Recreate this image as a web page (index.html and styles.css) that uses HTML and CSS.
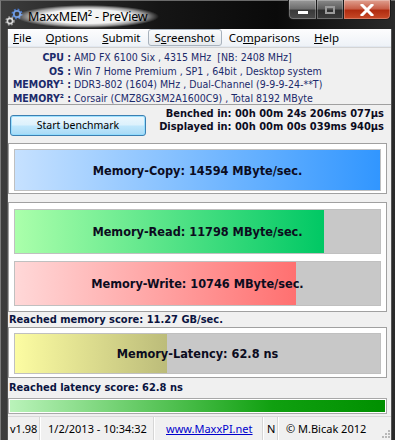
FILE: index.html
```html
<!DOCTYPE html>
<html>
<head>
<meta charset="utf-8">
<title>MaxxMEM² - PreView</title>
<link rel="stylesheet" href="styles.css">
</head>
<body>
<div class="window">
  <div class="titlebar">
    <svg class="appicon" width="20" height="20" viewBox="0 0 20 20">
      <circle cx="13" cy="7" r="4.2" fill="none" stroke="#4a78c8" stroke-width="2.6" stroke-dasharray="1.6 1.7"/>
      <circle cx="13" cy="7" r="3.2" fill="none" stroke="#6e9ae0" stroke-width="1.8"/>
      <circle cx="6" cy="14" r="3.6" fill="none" stroke="#9a9a9a" stroke-width="2.4" stroke-dasharray="1.5 1.5"/>
      <circle cx="6" cy="14" r="2.6" fill="none" stroke="#d8d8d8" stroke-width="1.6"/>
    </svg>
    <span class="title">MaxxMEM² - PreView</span>
    <div class="caption">
      <div class="cbtn cmin"><span class="glyph-min"></span></div>
      <div class="cbtn cmax"><span class="glyph-max"></span></div>
      <div class="cbtn cclose">
        <svg width="14" height="12" viewBox="0 0 14 12"><path d="M2 1 L12 11 M12 1 L2 11" stroke="#ffffff" stroke-width="3" stroke-linecap="square"/></svg>
      </div>
    </div>
  </div>
  <div class="frame">
    <div class="menubar">
      <span class="mi"><u>F</u>ile</span>
      <span class="mi"><u>O</u>ptions</span>
      <span class="mi"><u>S</u>ubmit</span>
      <span class="mi hot">S<u>c</u>reenshot</span>
      <span class="mi">Co<u>m</u>parisons</span>
      <span class="mi"><u>H</u>elp</span>
    </div>
    <div class="client">
      <div class="info">
        <div class="row"><span class="lbl">CPU :</span><span class="val">AMD FX 6100 Six , 4315 MHz&nbsp; [NB: 2408 MHz]</span></div>
        <div class="row"><span class="lbl">OS :</span><span class="val">Win 7 Home Premium , SP1 , 64bit , Desktop system</span></div>
        <div class="row"><span class="lbl">MEMORY¹ :</span><span class="val">DDR3-802 (1604) MHz , Dual-Channel (9-9-9-24-**T)</span></div>
        <div class="row"><span class="lbl">MEMORY² :</span><span class="val">Corsair (CMZ8GX3M2A1600C9) , Total 8192 MByte</span></div>
      </div>
      <div class="actions">
        <div class="start">Start benchmark</div>
        <div class="timing">
          <div>Benched in: 00h 00m 24s 206ms 077µs</div>
          <div>Displayed in: 00h 00m 00s 039ms 940µs</div>
        </div>
      </div>
      <div class="panel p-copy">
        <div class="bar tall42"><div class="fill f-copy" style="width:100%"></div><span class="btxt">Memory-Copy: 14594 MByte/sec.</span></div>
      </div>
      <div class="panel p-rw">
        <div class="bar tall45"><div class="fill f-read" style="width:84.7%"></div><span class="btxt">Memory-Read: 11798 MByte/sec.</span></div>
        <div class="bar tall45"><div class="fill f-write" style="width:77.1%"></div><span class="btxt">Memory-Write: 10746 MByte/sec.</span></div>
      </div>
      <div class="score s1">Reached memory score: 11.27 GB/sec.</div>
      <div class="panel p-lat">
        <div class="bar tall41"><div class="fill f-lat" style="width:41.7%"></div><span class="btxt">Memory-Latency: 62.8 ns</span></div>
      </div>
      <div class="score s2">Reached latency score: 62.8 ns</div>
      <div class="progress"><div class="pfill"></div></div>
      <div class="statusbar">
        <span class="sb sb1">v1.98</span>
        <span class="sb sb2">1/2/2013 - 10:34:32</span>
        <span class="sb sb3"><a href="#">www.MaxxPI.net</a></span>
        <span class="sb sb4">N</span>
        <span class="sb sb5">© M.Bicak 2012</span>
        <svg class="grip" width="10" height="10" viewBox="0 0 10 10">
          <g fill="#b8b8b8"><rect x="8" y="2" width="2" height="2"/><rect x="5" y="5" width="2" height="2"/><rect x="8" y="5" width="2" height="2"/><rect x="2" y="8" width="2" height="2"/><rect x="5" y="8" width="2" height="2"/><rect x="8" y="8" width="2" height="2"/></g>
        </svg>
      </div>
    </div>
  </div>
</div>
</body>
</html>
```

FILE: styles.css
```css
* { box-sizing: border-box; }
html, body { margin: 0; padding: 0; }
body {
  width: 395px;
  height: 440px;
  overflow: hidden;
  background: #000;
  font-family: "DejaVu Sans Condensed", "DejaVu Sans", sans-serif;
}
.window {
  width: 395px;
  height: 440px;
  display: flex;
  flex-direction: column;
  background: linear-gradient(90deg, #3c3c3c 0%, #151515 40%, #0a0a0a 70%, #2a2a2a 100%);
  border-left: 1px solid #7a7a7a;
  border-top: 1px solid #6a6a6a;
}
.titlebar {
  height: 28px;
  display: flex;
  align-items: flex-start;
  position: relative;
}
.appicon { margin: 6px 0 0 3px; flex: none; }
.title {
  margin: 4px 0 0 -8px;
  font-family: "Noto Sans", "Open Sans", sans-serif;
  font-size: 12.5px;
  letter-spacing: -0.2px;
  color: #000;
  padding: 3px 12px;
  background: radial-gradient(closest-side, rgba(255,255,255,0.95) 60%, rgba(255,255,255,0.55) 82%, rgba(255,255,255,0) 100%);
}
.caption {
  position: absolute;
  right: 4px;
  top: -1px;
  display: flex;
}
.cbtn {
  height: 20px;
  border: 1px solid #1a1a1a;
  border-top: none;
  display: flex;
  align-items: center;
  justify-content: center;
  box-shadow: inset 0 0 0 1px rgba(255,255,255,0.25);
}
.cmin {
  width: 29px;
  border-radius: 0 0 0 5px;
  background: linear-gradient(#9a9a9a 0%, #6e6e6e 45%, #3a3a3a 55%, #4a4a4a 100%);
}
.cmax {
  width: 27px;
  border-left: none;
  background: linear-gradient(#8a8a8a 0%, #5e5e5e 45%, #2e2e2e 55%, #3a3a3a 100%);
}
.cclose {
  width: 47px;
  border-left: none;
  border-radius: 0 0 5px 0;
  background: linear-gradient(#e0a090 0%, #c8604a 45%, #b02c10 55%, #c84a28 100%);
}
.glyph-min { display: block; width: 10px; height: 3px; background: #fff; margin-top: 6px; box-shadow: 0 0 1px #333; }
.glyph-max { display: block; width: 10px; height: 8px; border: 2px solid #9a9a9a; }

.frame {
  flex: 1;
  margin-left: 6px;
  margin-right: 3px;
  display: flex;
  flex-direction: column;
  background: #f0f0f0;
  border-left: 1px solid #555;
  border-right: 1px solid #555;
}
.menubar {
  height: 18px;
  display: flex;
  align-items: center;
  background: linear-gradient(#fdfdfe, #eef2f7);
  border-bottom: 1px solid #e2e8f0;
  font-family: "Noto Sans", "Open Sans", sans-serif;
  font-size: 11.5px;
  color: #000;
}
.mi {
  padding: 0 6px;
  height: 17px;
  line-height: 16px;
  border: 1px solid transparent;
}
.mi:first-child { margin-left: -2px; }
.mi.hot {
  border-color: #a8b2bd;
  border-radius: 3px;
  background: linear-gradient(#fafbfc, #e6eaee);
}
.client {
  flex: 1;
  display: flex;
  flex-direction: column;
}
.info {
  height: 58px;
  padding-top: 3px;
  border-top: 1px solid #d4d4d4;
  border-bottom: 1px solid #a0a0a0;
  color: #1b2a6b;
  font-size: 10.5px;
}
.row {
  display: flex;
  height: 13.5px;
  line-height: 13.5px;
}
.lbl {
  width: 66px;
  text-align: right;
  font-weight: bold;
  padding-right: 3px;
  white-space: nowrap;
}
.val { white-space: nowrap; }
.actions {
  height: 38px;
  display: flex;
  align-items: flex-start;
  justify-content: space-between;
}
.start {
  margin: 10px 0 0 2px;
  width: 136px;
  height: 21px;
  border: 1px solid #3c7fb1;
  border-radius: 3px;
  background: linear-gradient(#ecf7fd 0%, #dcf1fc 48%, #c0e7fc 52%, #a8daf6 100%);
  box-shadow: inset 0 0 0 1px rgba(140,220,255,0.8);
  font-family: "Noto Sans", "Open Sans", sans-serif;
  font-size: 10.5px;
  color: #000;
  text-align: center;
  line-height: 18px;
}
.timing {
  margin: 2px 7px 0 0;
  font-size: 11px;
  font-weight: bold;
  color: #0c0c1e;
  text-align: right;
  line-height: 13px;
  white-space: nowrap;
}
.panel {
  background: #fff;
  border: 1px solid #a0a0a0;
  margin-right: 4px;
  display: flex;
  flex-direction: column;
  padding: 5px 5px 2px 5px;
}
.p-copy { height: 51px; }
.p-rw { margin-top: 8px; height: 110px; padding-top: 6px; gap: 7px; }
.p-lat { height: 51px; }
.bar {
  position: relative;
  background: #c8c8c8;
  border: 1px solid #c0c0c0;
  display: flex;
  align-items: center;
  justify-content: center;
}
.tall42 { height: 42px; }
.tall45 { height: 45px; }
.tall41 { height: 41px; }
.fill {
  position: absolute;
  left: 0; top: 0; bottom: 0;
}
.f-copy { background: linear-gradient(90deg, #c6e1ff, #3196ff); }
.f-read { background: linear-gradient(90deg, #abffab, #00c864); }
.f-write { background: linear-gradient(90deg, #ffd8d8, #ff7070); }
.f-lat { background: linear-gradient(90deg, #fcfca2, #bcbc7a); }
.btxt {
  position: relative;
  font-size: 12.6px;
  font-weight: bold;
  color: #0c0c1e;
  white-space: nowrap;
}
.score {
  font-size: 11px;
  font-weight: bold;
  color: #0a1440;
  padding-left: 1px;
  white-space: nowrap;
}
.s1 { height: 15px; line-height: 15px; }
.s2 { height: 20px; line-height: 20px; }
.progress {
  height: 16px;
  margin-right: 4px;
  border: 1px solid #a8a8a8;
  background: #fff;
  padding: 1px;
}
.pfill {
  height: 100%;
  background: linear-gradient(90deg, #baf3ba, #70d070 30%, #10a010 70%, #009000);
}
.statusbar {
  flex: 1;
  margin-top: 2px;
  display: flex;
  align-items: center;
  border-top: 1px solid #d8d8d8;
  font-family: "Noto Sans", "Open Sans", sans-serif;
  font-size: 11px;
  color: #000;
  position: relative;
}
.sb {
  height: 100%;
  display: flex;
  align-items: center;
  border-right: 1px solid #d6d6d6;
  box-shadow: 1px 0 0 #fff;
  white-space: nowrap;
}
.sb1 { width: 32px; padding-left: 2px; }
.sb2 { width: 114px; padding-left: 8px; }
.sb3 { width: 109px; padding-left: 12px; }
.sb3 a { color: #0000cc; }
.sb4 { width: 15px; padding-left: 4px; }
.sb5 { border-right: none; box-shadow: none; padding-left: 8px; }
.grip { position: absolute; right: 1px; bottom: 2px; }
```
